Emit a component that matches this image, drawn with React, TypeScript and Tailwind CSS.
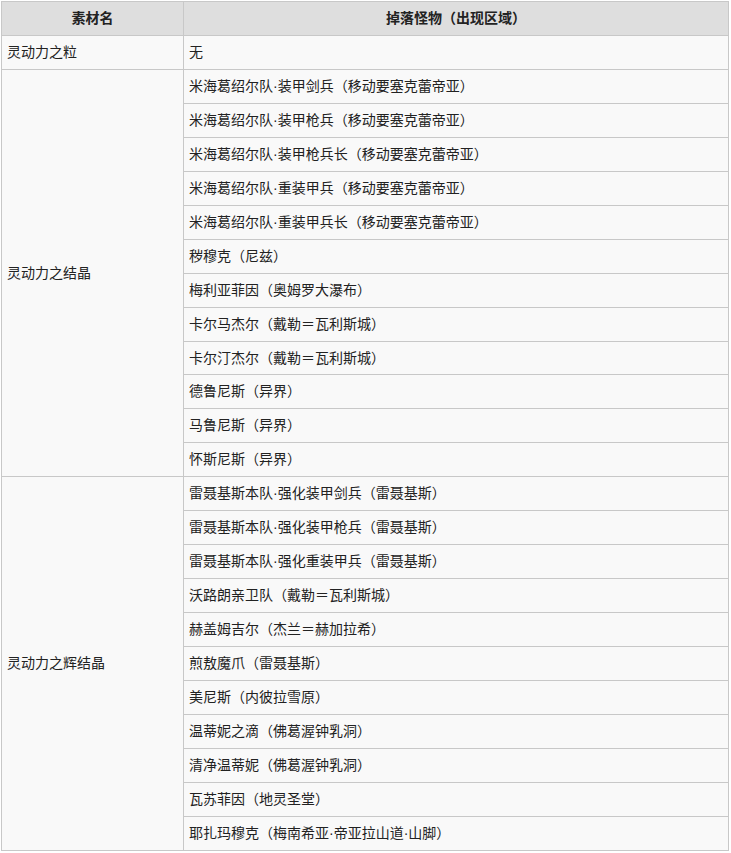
const groups: { name: string; drops: string[] }[] = [
  { name: "灵动力之粒", drops: ["无"] },
  {
    name: "灵动力之结晶",
    drops: [
      "米海葛绍尔队·装甲剑兵（移动要塞克蕾帝亚）",
      "米海葛绍尔队·装甲枪兵（移动要塞克蕾帝亚）",
      "米海葛绍尔队·装甲枪兵长（移动要塞克蕾帝亚）",
      "米海葛绍尔队·重装甲兵（移动要塞克蕾帝亚）",
      "米海葛绍尔队·重装甲兵长（移动要塞克蕾帝亚）",
      "秽穆克（尼兹）",
      "梅利亚菲因（奥姆罗大瀑布）",
      "卡尔马杰尔（戴勒＝瓦利斯城）",
      "卡尔汀杰尔（戴勒＝瓦利斯城）",
      "德鲁尼斯（异界）",
      "马鲁尼斯（异界）",
      "怀斯尼斯（异界）",
    ],
  },
  {
    name: "灵动力之辉结晶",
    drops: [
      "雷聂基斯本队·强化装甲剑兵（雷聂基斯）",
      "雷聂基斯本队·强化装甲枪兵（雷聂基斯）",
      "雷聂基斯本队·强化重装甲兵（雷聂基斯）",
      "沃路朗亲卫队（戴勒＝瓦利斯城）",
      "赫盖姆吉尔（杰兰＝赫加拉希）",
      "煎敖魔爪（雷聂基斯）",
      "美尼斯（内彼拉雪原）",
      "温蒂妮之滴（佛葛渥钟乳洞）",
      "清净温蒂妮（佛葛渥钟乳洞）",
      "瓦苏菲因（地灵圣堂）",
      "耶扎玛穆克（梅南希亚·帝亚拉山道·山脚）",
    ],
  },
];

const cell = "border border-[#c8c8c8] px-[5px] py-[5px] leading-[22.96px]";

export default function App() {
  return (
    <div className="min-h-screen bg-white pl-px pt-px text-[14px] text-[#222] font-['Liberation_Sans','Noto_Sans_CJK_SC',sans-serif]">
      <table className="w-[728px] border-collapse bg-[#f9f9f9]">
        <thead>
          <tr className="bg-[#dedede]">
            <th className={`${cell} w-[182px] text-center font-bold`}>素材名</th>
            <th className={`${cell} text-center font-bold`}>掉落怪物（出现区域）</th>
          </tr>
        </thead>
        <tbody>
          {groups.map((g) =>
            g.drops.map((d, i) => (
              <tr key={g.name + i}>
                {i === 0 && (
                  <td className={`${cell} align-middle`} rowSpan={g.drops.length}>
                    {g.name}
                  </td>
                )}
                <td className={cell}>{d}</td>
              </tr>
            ))
          )}
        </tbody>
      </table>
    </div>
  );
}
